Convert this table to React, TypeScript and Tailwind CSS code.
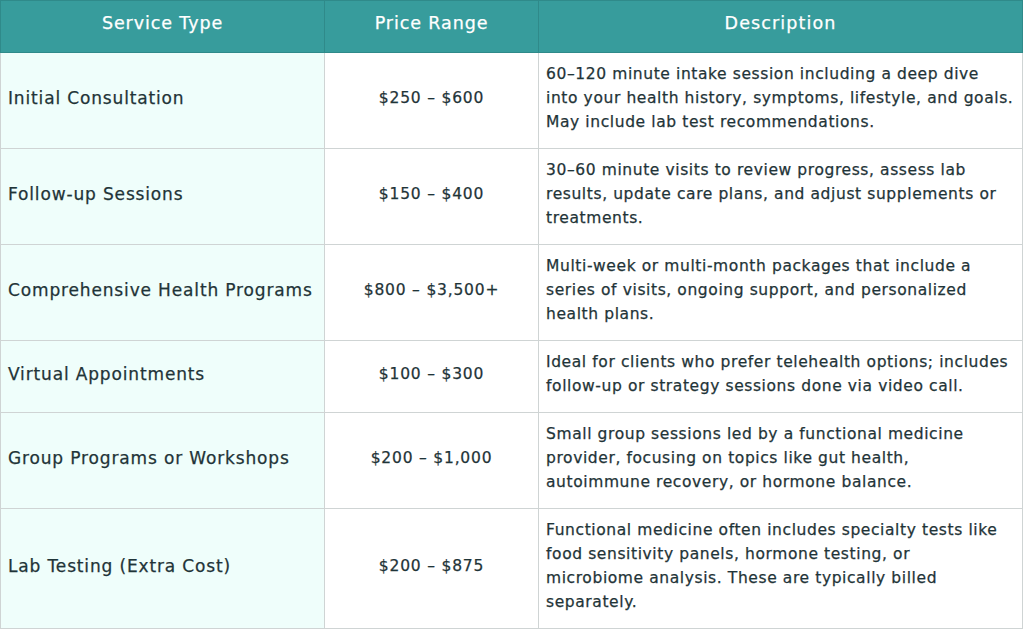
const rows = [
  {
    service: "Initial Consultation",
    price: "$250 – $600",
    desc: [
      "60–120 minute intake session including a deep dive",
      "into your health history, symptoms, lifestyle, and goals.",
      "May include lab test recommendations.",
    ],
  },
  {
    service: "Follow-up Sessions",
    price: "$150 – $400",
    desc: [
      "30–60 minute visits to review progress, assess lab",
      "results, update care plans, and adjust supplements or",
      "treatments.",
    ],
  },
  {
    service: "Comprehensive Health Programs",
    price: "$800 – $3,500+",
    desc: [
      "Multi-week or multi-month packages that include a",
      "series of visits, ongoing support, and personalized",
      "health plans.",
    ],
  },
  {
    service: "Virtual Appointments",
    price: "$100 – $300",
    desc: [
      "Ideal for clients who prefer telehealth options; includes",
      "follow-up or strategy sessions done via video call.",
    ],
  },
  {
    service: "Group Programs or Workshops",
    price: "$200 – $1,000",
    desc: [
      "Small group sessions led by a functional medicine",
      "provider, focusing on topics like gut health,",
      "autoimmune recovery, or hormone balance.",
    ],
  },
  {
    service: "Lab Testing (Extra Cost)",
    price: "$200 – $875",
    desc: [
      "Functional medicine often includes specialty tests like",
      "food sensitivity panels, hormone testing, or",
      "microbiome analysis. These are typically billed",
      "separately.",
    ],
  },
];

const App = () => (
  <div className="w-[1024px] bg-white font-['DejaVu_Sans',sans-serif] text-[#1f3438] [-webkit-text-stroke:0.25px_currentColor]">
    <table className="w-[1023px] border-collapse table-fixed">
      <colgroup>
        <col className="w-[324px]" />
        <col className="w-[214px]" />
        <col />
      </colgroup>
      <thead>
        <tr className="bg-[#379c9c] text-white">
          <th className="h-[52px] border border-[#2f8a8a] pb-[6px] text-[17.5px] font-normal tracking-[0.9px]">Service Type</th>
          <th className="h-[52px] border border-[#2f8a8a] pb-[6px] text-[17.5px] font-normal tracking-[0.9px]">Price Range</th>
          <th className="h-[52px] border border-[#2f8a8a] pb-[6px] text-[17.5px] font-normal tracking-[1.1px]">Description</th>
        </tr>
      </thead>
      <tbody>
        {rows.map((r) => (
          <tr key={r.service}>
            <td className="border border-[#cfd4d4] bg-[#effefb] px-[7px] pt-[8.5px] pb-[14.5px] text-[17px] leading-6 tracking-[0.85px] whitespace-nowrap">
              {r.service}
            </td>
            <td className="border border-[#cfd4d4] px-2 pt-[8.5px] pb-[14.5px] text-center text-[15.5px] leading-6 tracking-[0.8px]">
              {r.price}
            </td>
            <td className="border border-[#cfd4d4] pl-[7px] pr-1 pt-[8.5px] pb-[14.5px] text-[15.5px] leading-6 tracking-[0.6px] whitespace-nowrap">
              {r.desc.map((line) => (
                <span key={line} className="block">
                  {line}
                </span>
              ))}
            </td>
          </tr>
        ))}
      </tbody>
    </table>
  </div>
);

export default App;
